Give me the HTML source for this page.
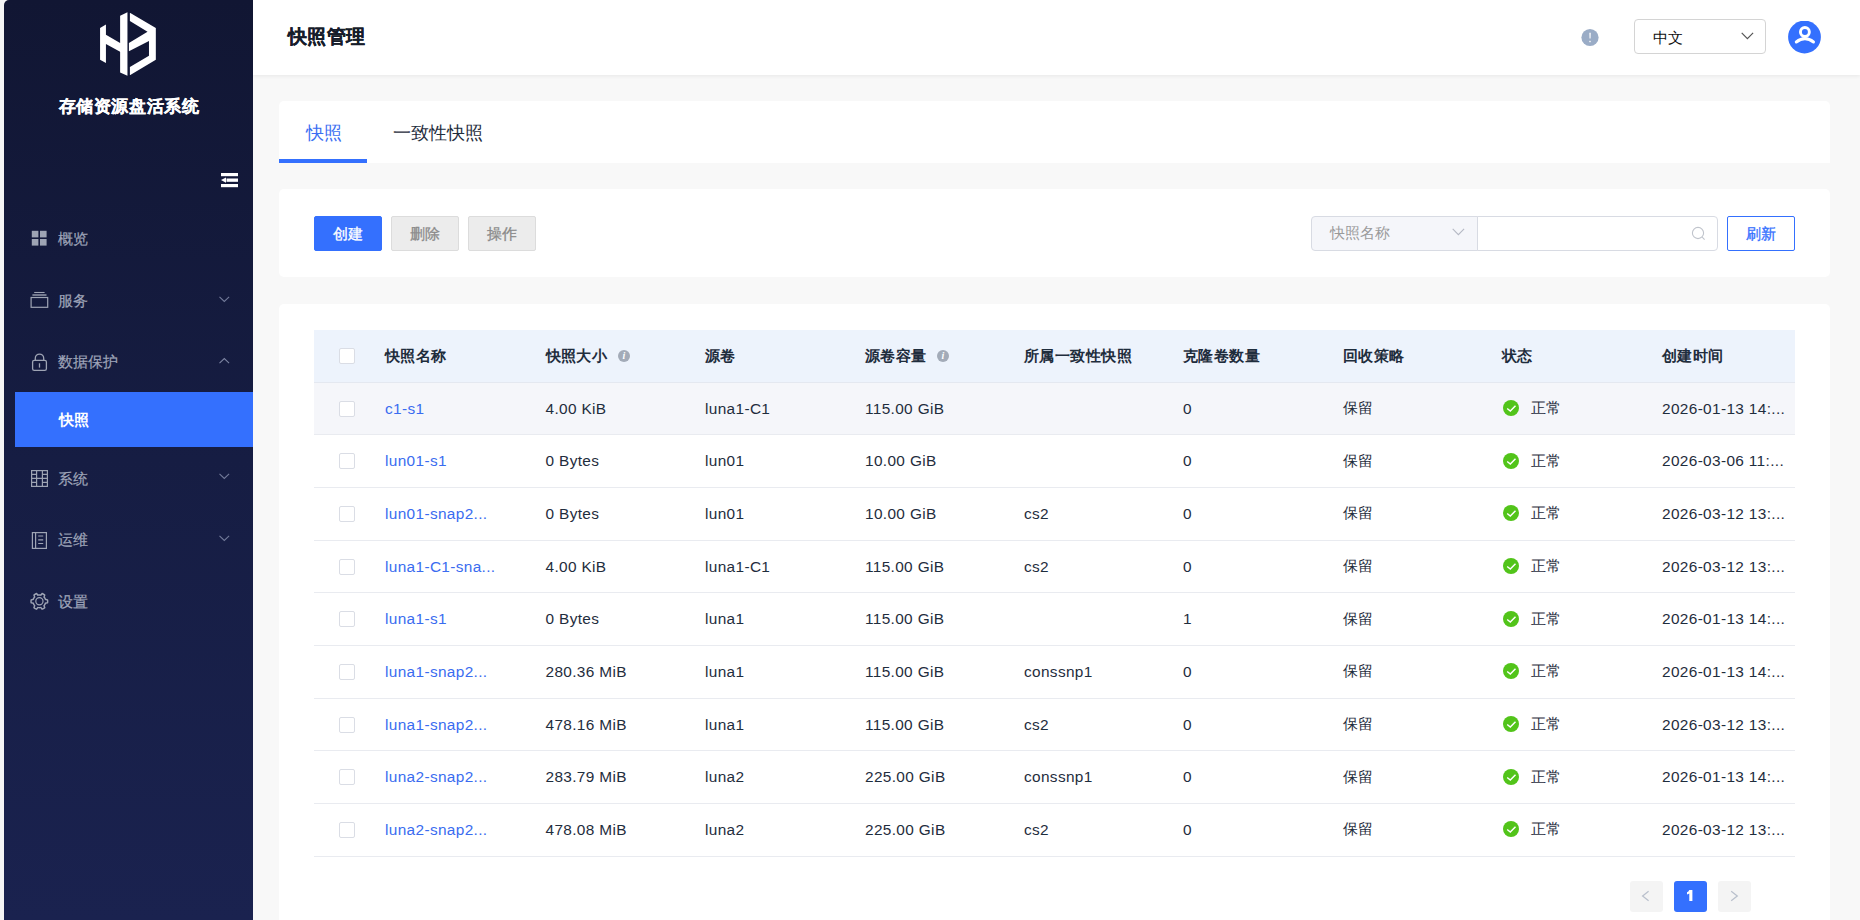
<!DOCTYPE html>
<html><head><meta charset="utf-8">
<style>
*{box-sizing:border-box;margin:0;padding:0}
html,body{width:1860px;height:920px;overflow:hidden}
body{position:relative;background:#f8f8f8;font-family:"Liberation Sans",sans-serif;color:#333}
.abs{position:absolute}
.t{position:absolute;white-space:nowrap;line-height:20px;height:20px;margin-top:-10px}
#strip{left:0;top:0;width:4px;height:920px;background:#f5f5f5}
#side{left:4px;top:0;width:249px;height:920px;background:linear-gradient(180deg,#111633 0%,#161d43 50%,#1a224f 100%);border-top-left-radius:5px}
#header{left:253px;top:0;width:1607px;height:75px;background:#fff;box-shadow:0 1px 4px rgba(0,0,0,.07)}
.card{background:#fff;border-radius:5px}
#tabs{left:279px;top:101px;width:1551px;height:62px;border-radius:5px 5px 0 0}
#tools{left:279px;top:189px;width:1551px;height:88px}
#tcard{left:279px;top:304px;width:1551px;height:660px}
.nav{font-size:15.4px;color:#9ea4b8;-webkit-text-stroke:0.2px #9ea4b8}
.navsel{left:15px;top:392px;width:238px;height:55px;background:#3470fe}
.thead{background:#edf3fc;border-bottom:1px solid #e4e8f0}
.row{border-bottom:1px solid #e9ebf0}
.cb{width:16px;height:16px;border:1px solid #dadde5;border-radius:2px;background:#fff}
.th{font-size:15.4px;font-weight:bold;color:#1f2d3d;letter-spacing:0.45px}
.td{font-size:15.4px;color:#1f2d3d;margin-top:-10.6px}
.link{color:#3a6cf0}
.info{width:12px;height:12px;border-radius:50%;background:#a3abb8;color:#fff;font-size:10px;line-height:12px;text-align:center;font-family:"Liberation Serif",serif;font-weight:bold}
.btn{height:35px;line-height:34px;text-align:center;font-size:15.4px;border-radius:2px}
.lat{letter-spacing:0.35px;margin-top:-10px}

</style></head><body>
<div id="strip" class="abs"></div>
<div id="side" class="abs"></div>
<svg class="abs" style="left:80px;top:0" width="100" height="90" viewBox="0 0 1022 920"><path fill="#fff" d="M205 285 L265 250 L265 355 L410 440 L410 160 L485 125 L485 775 L410 740 L410 530 L265 450 L265 645 L205 610 Z"/><path fill="#fff" d="M510 130 L775 285 L775 610 L510 770 L510 685 L705 570 L705 420 L500 525 L500 440 L690 325 L510 215 Z"/></svg>
<div class="t" style="left:0.5px;width:257px;text-align:center;top:106.5px;font-size:17px;letter-spacing:0.6px;font-weight:bold;color:#fff;-webkit-text-stroke:0.2px #fff">存储资源盘活系统</div>
<svg class="abs" style="left:220px;top:172px" width="20" height="16" viewBox="0 0 20 16"><rect x="1" y="1" width="17" height="3.2" fill="#fff"/><rect x="6.5" y="6.5" width="11.5" height="3.3" fill="#fff"/><path d="M1 8.1 L6 5.4 L6 10.8 Z" fill="#fff"/><rect x="1" y="12" width="17" height="3.2" fill="#fff"/></svg>
<!-- nav icons -->
<svg class="abs" style="left:31px;top:230px" width="17" height="17" viewBox="0 0 17 17" fill="#9ea4b4"><rect x="0.8" y="0.8" width="6.6" height="6.6"/><rect x="9" y="0.8" width="6.6" height="6.6"/><rect x="0.8" y="9" width="6.6" height="6.6"/><rect x="9" y="9" width="6.6" height="6.6"/></svg>
<div class="t nav" style="left:58px;top:238.5px">概览</div>
<svg class="abs" style="left:29px;top:290px" width="21" height="20" viewBox="0 0 21 20" fill="none" stroke="#9ea4b4"><path d="M5.2 2.5 H15.6" stroke-width="1.1"/><path d="M3.4 5 H17.5" stroke-width="1.4"/><rect x="2.1" y="7.5" width="16.6" height="9.8" stroke-width="1.2"/></svg>
<div class="t nav" style="left:58px;top:300.5px">服务</div>
<svg class="abs" style="left:219px;top:295.5px" width="11" height="7" viewBox="0 0 11 7"><path d="M0.5 0.8 L5.3 5.5 L10.1 0.8" stroke="#737b9a" stroke-width="1.05" fill="none"/></svg>
<svg class="abs" style="left:30px;top:352px" width="19" height="20" viewBox="0 0 19 20" fill="none" stroke="#9ea4b4" stroke-width="1.3"><path d="M5.3 8.2 V6.3 A4.2 4.2 0 0 1 13.7 6.3 V8.2"/><rect x="2.6" y="8.3" width="13.8" height="10" rx="1.6"/><path d="M9.5 11.3 V15.6"/></svg>
<div class="t nav" style="left:58px;top:362px">数据保护</div>
<svg class="abs" style="left:219px;top:357px" width="11" height="7" viewBox="0 0 11 7"><path d="M0.5 6.2 L5.3 1.5 L10.1 6.2" stroke="#7d85a3" stroke-width="1.05" fill="none"/></svg>
<div class="abs navsel"></div>
<div class="t" style="left:59px;top:419.5px;font-size:15.4px;font-weight:bold;color:#fff">快照</div>
<svg class="abs" style="left:30px;top:469px" width="19" height="19" viewBox="0 0 19 19" fill="none" stroke="#9ea4b4" stroke-width="1.2"><rect x="1.6" y="1.6" width="15.8" height="15.8"/><path d="M6.6 1.6 V17.4 M12.4 1.6 V17.4 M1.6 9.4 H17.4 M1.6 5.4 H6.6 M1.6 13.3 H6.6 M12.4 5.4 H17.4 M12.4 13.3 H17.4"/></svg>
<div class="t nav" style="left:58px;top:478.5px">系统</div>
<svg class="abs" style="left:219px;top:473px" width="11" height="7" viewBox="0 0 11 7"><path d="M0.5 0.8 L5.3 5.5 L10.1 0.8" stroke="#737b9a" stroke-width="1.05" fill="none"/></svg>
<svg class="abs" style="left:30px;top:531px" width="19" height="20" viewBox="0 0 19 20" fill="none" stroke="#9ea4b4" stroke-width="1.2"><rect x="2.4" y="1.6" width="14" height="15.8"/><path d="M5.6 1.6 V17.4 M8.2 5 H13.2 M8.2 8.9 H13.2 M8.2 12.5 H13.2"/></svg>
<div class="t nav" style="left:58px;top:540px">运维</div>
<svg class="abs" style="left:219px;top:535px" width="11" height="7" viewBox="0 0 11 7"><path d="M0.5 0.8 L5.3 5.5 L10.1 0.8" stroke="#737b9a" stroke-width="1.05" fill="none"/></svg>
<svg class="abs" style="left:29.1px;top:591.4px" width="20.7" height="20.7" viewBox="0 0 1024 1024"><g transform="rotate(90 512 512)"><path fill="#9ea4b4" d="M924.8 625.7l-65.5-56c3.1-19 4.7-38.4 4.7-57.8s-1.6-38.8-4.7-57.8l65.5-56a32.03 32.03 0 009.3-35.2l-.9-2.6a443.74 443.74 0 00-79.7-137.9l-1.8-2.1a32.12 32.12 0 00-35.1-9.5l-81.3 28.9c-30-24.6-63.5-44-99.7-57.6l-15.7-85a32.05 32.05 0 00-25.8-25.700l-2.7-.5c-52.1-9.4-106.9-9.4-159 0l-2.7.5a32.05 32.05 0 00-25.8 25.7l-15.8 85.4a351.86 351.86 0 00-99 57.4l-81.9-29.1a32 32 0 00-35.1 9.5l-1.8 2.1a446.02 446.020 0 00-79.7 137.9l-.9 2.6c-4.5 12.5-.8 26.5 9.3 35.2l66.3 56.6c-3.1 18.8-4.6 38-4.6 57.1 0 19.2 1.5 38.4 4.6 57.1L99 625.5a32.03 32.03 0 00-9.3 35.2l.9 2.6c18.1 50.4 44.9 96.9 79.7 137.9l1.8 2.1a32.12 32.12 0 0035.1 9.5l81.9-29.1c29.8 24.5 63.1 43.9 99 57.4l15.8 85.4a32.05 32.05 0 0025.8 25.7l2.7.5a449.4 449.4 0 00159 0l2.7-.5a32.05 32.05 0 0025.8-25.7l15.7-85a350 350 0 0099.7-57.6l81.3 28.9a32 32 0 0035.1-9.5l1.8-2.1c34.8-41.1 61.6-87.5 79.7-137.900l.9-2.6c4.5-12.3.8-26.3-9.3-35zM788.3 465.9c2.5 15.1 3.8 30.6 3.8 46.1s-1.3 31-3.8 46.1l-6.6 40.1 74.7 63.9a370.03 370.03 0 01-42.6 73.6L721 702.8l-31.4 25.8c-23.9 19.6-50.5 35-79.3 45.8l-38.1 14.3-17.9 97a377.5 377.5 0 01-85 0l-17.9-97.2-37.8-14.5c-28.5-10.8-55-26.2-78.7-45.7l-31.4-25.9-93.4 33.2c-17-22.9-31.2-47.6-42.6-73.6l75.5-64.5-6.5-40c-2.4-14.9-3.7-30.300-3.7-45.5 0-15.3 1.2-30.6 3.7-45.5l6.5-40-75.5-64.5c11.3-26.1 25.6-50.7 42.6-73.6l93.4 33.2 31.4-25.9c23.7-19.5 50.2-34.9 78.7-45.7l37.9-14.3 17.9-97.2c28.1-3.2 56.8-3.2 85 0l17.9 97 38.1 14.3c28.7 10.8 55.4 26.2 79.3 45.8l31.4 25.8 92.8-32.9c17 22.9 31.2 47.6 42.6 73.6L781.8 426l6.5 39.9z"/></g><circle cx="515" cy="505" r="178" fill="none" stroke="#9ea4b4" stroke-width="60"/></svg>
<div class="t nav" style="left:58px;top:601.5px">设置</div>
<div id="header" class="abs"></div>
<div class="t" style="left:287.5px;top:36.8px;font-size:19px;letter-spacing:0.55px;font-weight:bold;color:#161c2a;-webkit-text-stroke:0.2px #161c2a">快照管理</div>
<svg class="abs" style="left:1580px;top:27px" width="20" height="20" viewBox="0 0 20 20"><circle cx="10" cy="10.5" r="8.6" fill="#9aacc6"/><path d="M9.35 5.8 H10.75 L10.55 11.6 H9.55 Z" fill="#fff"/><rect x="9.3" y="13.8" width="1.4" height="1.4" fill="#fff"/></svg>
<div class="abs" style="left:1634px;top:19px;width:132px;height:35px;border:1px solid #d4d4d4;border-radius:4px;background:#fff"></div>
<div class="t" style="left:1652.7px;top:37.5px;font-size:15.4px;color:#111">中文</div>
<svg class="abs" style="left:1740.8px;top:32px" width="13" height="8" viewBox="0 0 13 8"><path d="M0.7 0.8 L6.4 6.6 L12.1 0.8" stroke="#555" stroke-width="1.2" fill="none"/></svg>
<svg class="abs" style="left:1788px;top:21px" width="33" height="33" viewBox="0 0 33 33"><circle cx="16.5" cy="16" r="16.4" fill="#3470fe"/><circle cx="16.9" cy="11" r="4.45" fill="none" stroke="#fff" stroke-width="2.9"/><path d="M8.3 21 Q16.9 14.2 25.5 21" fill="none" stroke="#fff" stroke-width="3" stroke-linecap="round"/></svg>
<div id="tabs" class="abs card"></div>
<div class="t" style="left:306px;top:132.5px;font-size:17.6px;color:#3b6ef2">快照</div>
<div class="t" style="left:393px;top:132.5px;font-size:17.6px;color:#1f2d3d">一致性快照</div>
<div class="abs" style="left:279px;top:159px;width:88px;height:4px;background:#3470fe"></div>
<div id="tools" class="abs card"></div>
<div class="abs btn" style="left:314px;top:216px;width:68px;background:#3470fe;color:#fff;-webkit-text-stroke:0.35px #fff;border:1px solid #3470fe">创建</div>
<div class="abs btn" style="left:391px;top:216px;width:68px;background:#ececec;color:#8a8a8a;border:1px solid #dcdcdc;-webkit-text-stroke:0.3px #8a8a8a">删除</div>
<div class="abs btn" style="left:468px;top:216px;width:68px;background:#ececec;color:#8a8a8a;border:1px solid #dcdcdc;-webkit-text-stroke:0.3px #8a8a8a">操作</div>
<div class="abs" style="left:1311px;top:216px;width:167px;height:35px;background:#f5f6fa;border:1px solid #d8dbe3;border-radius:4px 0 0 4px"></div>
<div class="t" style="left:1330px;top:232.8px;font-size:15.4px;color:#9a9a9a">快照名称</div>
<svg class="abs" style="left:1451.6px;top:228px" width="13" height="8" viewBox="0 0 13 8"><path d="M0.7 0.8 L6.4 6.6 L12.1 0.8" stroke="#b5b9c4" stroke-width="1.1" fill="none"/></svg>
<div class="abs" style="left:1477px;top:216px;width:241px;height:35px;background:#fff;border:1px solid #d8dbe3;border-radius:0 4px 4px 0"></div>
<svg class="abs" style="left:1691px;top:226px" width="15" height="15" viewBox="0 0 15 15" fill="none" stroke="#c0c4cc" stroke-width="1.1"><circle cx="7" cy="7" r="5.6"/><path d="M11.2 11.2 L13.6 13.6"/></svg>
<div class="abs btn" style="left:1727px;top:216px;width:68px;background:#fff;color:#3470fe;border:1px solid #3470fe;-webkit-text-stroke:0.3px #3470fe">刷新</div>
<div id="tcard" class="abs card"></div>
<div class="abs thead" style="left:314px;top:330px;width:1481px;height:53px"></div>
<div class="abs cb" style="left:339px;top:348px"></div>
<div class="t th" style="left:385px;top:356px">快照名称</div>
<div class="t th" style="left:545.5px;top:356px">快照大小</div>
<div class="t th" style="left:705px;top:356px">源卷</div>
<div class="t th" style="left:865px;top:356px">源卷容量</div>
<div class="t th" style="left:1024px;top:356px">所属一致性快照</div>
<div class="t th" style="left:1183px;top:356px">克隆卷数量</div>
<div class="t th" style="left:1343px;top:356px">回收策略</div>
<div class="t th" style="left:1502px;top:356px">状态</div>
<div class="t th" style="left:1662px;top:356px">创建时间</div>
<div class="abs info" style="left:618px;top:350px"><i>i</i></div>
<div class="abs info" style="left:937px;top:350px"><i>i</i></div>
<div class="abs row" style="left:314px;top:383px;width:1481px;height:52px;background:#f5f6fa"></div>
<div class="abs cb" style="left:339px;top:400.634px"></div>
<div class="t td link lat" style="left:385px;top:408.634px">c1-s1</div>
<div class="t td lat" style="left:545.5px;top:408.634px">4.00 KiB</div>
<div class="t td lat" style="left:705px;top:408.634px">luna1-C1</div>
<div class="t td lat" style="left:865px;top:408.634px">115.00 GiB</div>
<div class="t td lat" style="left:1183px;top:408.634px">0</div>
<div class="t td" style="left:1343px;top:408.634px">保留</div>
<svg class="abs" style="left:1503px;top:400.134px" width="16" height="16" viewBox="0 0 16 16"><circle cx="8" cy="8" r="8" fill="#52c41a"/><path d="M4.2 8.5 L7.3 11.1 L12.5 5.8" stroke="#fff" stroke-width="1.45" fill="none"/></svg>
<div class="t td" style="left:1531px;top:408.634px">正常</div>
<div class="t td lat" style="left:1662px;top:408.634px">2026-01-13 14:...</div>
<div class="abs row" style="left:314px;top:435px;width:1481px;height:53px;background:#fff"></div>
<div class="abs cb" style="left:339px;top:453.300px"></div>
<div class="t td link lat" style="left:385px;top:461.300px">lun01-s1</div>
<div class="t td lat" style="left:545.5px;top:461.300px">0 Bytes</div>
<div class="t td lat" style="left:705px;top:461.300px">lun01</div>
<div class="t td lat" style="left:865px;top:461.300px">10.00 GiB</div>
<div class="t td lat" style="left:1183px;top:461.300px">0</div>
<div class="t td" style="left:1343px;top:461.300px">保留</div>
<svg class="abs" style="left:1503px;top:452.800px" width="16" height="16" viewBox="0 0 16 16"><circle cx="8" cy="8" r="8" fill="#52c41a"/><path d="M4.2 8.5 L7.3 11.1 L12.5 5.8" stroke="#fff" stroke-width="1.45" fill="none"/></svg>
<div class="t td" style="left:1531px;top:461.300px">正常</div>
<div class="t td lat" style="left:1662px;top:461.300px">2026-03-06 11:...</div>
<div class="abs row" style="left:314px;top:488px;width:1481px;height:53px;background:#fff"></div>
<div class="abs cb" style="left:339px;top:505.967px"></div>
<div class="t td link lat" style="left:385px;top:513.967px">lun01-snap2...</div>
<div class="t td lat" style="left:545.5px;top:513.967px">0 Bytes</div>
<div class="t td lat" style="left:705px;top:513.967px">lun01</div>
<div class="t td lat" style="left:865px;top:513.967px">10.00 GiB</div>
<div class="t td lat" style="left:1024px;top:513.967px">cs2</div>
<div class="t td lat" style="left:1183px;top:513.967px">0</div>
<div class="t td" style="left:1343px;top:513.967px">保留</div>
<svg class="abs" style="left:1503px;top:505.467px" width="16" height="16" viewBox="0 0 16 16"><circle cx="8" cy="8" r="8" fill="#52c41a"/><path d="M4.2 8.5 L7.3 11.1 L12.5 5.8" stroke="#fff" stroke-width="1.45" fill="none"/></svg>
<div class="t td" style="left:1531px;top:513.967px">正常</div>
<div class="t td lat" style="left:1662px;top:513.967px">2026-03-12 13:...</div>
<div class="abs row" style="left:314px;top:541px;width:1481px;height:52px;background:#fff"></div>
<div class="abs cb" style="left:339px;top:558.635px"></div>
<div class="t td link lat" style="left:385px;top:566.635px">luna1-C1-sna...</div>
<div class="t td lat" style="left:545.5px;top:566.635px">4.00 KiB</div>
<div class="t td lat" style="left:705px;top:566.635px">luna1-C1</div>
<div class="t td lat" style="left:865px;top:566.635px">115.00 GiB</div>
<div class="t td lat" style="left:1024px;top:566.635px">cs2</div>
<div class="t td lat" style="left:1183px;top:566.635px">0</div>
<div class="t td" style="left:1343px;top:566.635px">保留</div>
<svg class="abs" style="left:1503px;top:558.135px" width="16" height="16" viewBox="0 0 16 16"><circle cx="8" cy="8" r="8" fill="#52c41a"/><path d="M4.2 8.5 L7.3 11.1 L12.5 5.8" stroke="#fff" stroke-width="1.45" fill="none"/></svg>
<div class="t td" style="left:1531px;top:566.635px">正常</div>
<div class="t td lat" style="left:1662px;top:566.635px">2026-03-12 13:...</div>
<div class="abs row" style="left:314px;top:593px;width:1481px;height:53px;background:#fff"></div>
<div class="abs cb" style="left:339px;top:611.302px"></div>
<div class="t td link lat" style="left:385px;top:619.302px">luna1-s1</div>
<div class="t td lat" style="left:545.5px;top:619.302px">0 Bytes</div>
<div class="t td lat" style="left:705px;top:619.302px">luna1</div>
<div class="t td lat" style="left:865px;top:619.302px">115.00 GiB</div>
<div class="t td lat" style="left:1183px;top:619.302px">1</div>
<div class="t td" style="left:1343px;top:619.302px">保留</div>
<svg class="abs" style="left:1503px;top:610.802px" width="16" height="16" viewBox="0 0 16 16"><circle cx="8" cy="8" r="8" fill="#52c41a"/><path d="M4.2 8.5 L7.3 11.1 L12.5 5.8" stroke="#fff" stroke-width="1.45" fill="none"/></svg>
<div class="t td" style="left:1531px;top:619.302px">正常</div>
<div class="t td lat" style="left:1662px;top:619.302px">2026-01-13 14:...</div>
<div class="abs row" style="left:314px;top:646px;width:1481px;height:53px;background:#fff"></div>
<div class="abs cb" style="left:339px;top:663.968px"></div>
<div class="t td link lat" style="left:385px;top:671.968px">luna1-snap2...</div>
<div class="t td lat" style="left:545.5px;top:671.968px">280.36 MiB</div>
<div class="t td lat" style="left:705px;top:671.968px">luna1</div>
<div class="t td lat" style="left:865px;top:671.968px">115.00 GiB</div>
<div class="t td lat" style="left:1024px;top:671.968px">conssnp1</div>
<div class="t td lat" style="left:1183px;top:671.968px">0</div>
<div class="t td" style="left:1343px;top:671.968px">保留</div>
<svg class="abs" style="left:1503px;top:663.468px" width="16" height="16" viewBox="0 0 16 16"><circle cx="8" cy="8" r="8" fill="#52c41a"/><path d="M4.2 8.5 L7.3 11.1 L12.5 5.8" stroke="#fff" stroke-width="1.45" fill="none"/></svg>
<div class="t td" style="left:1531px;top:671.968px">正常</div>
<div class="t td lat" style="left:1662px;top:671.968px">2026-01-13 14:...</div>
<div class="abs row" style="left:314px;top:699px;width:1481px;height:52px;background:#fff"></div>
<div class="abs cb" style="left:339px;top:716.635px"></div>
<div class="t td link lat" style="left:385px;top:724.635px">luna1-snap2...</div>
<div class="t td lat" style="left:545.5px;top:724.635px">478.16 MiB</div>
<div class="t td lat" style="left:705px;top:724.635px">luna1</div>
<div class="t td lat" style="left:865px;top:724.635px">115.00 GiB</div>
<div class="t td lat" style="left:1024px;top:724.635px">cs2</div>
<div class="t td lat" style="left:1183px;top:724.635px">0</div>
<div class="t td" style="left:1343px;top:724.635px">保留</div>
<svg class="abs" style="left:1503px;top:716.135px" width="16" height="16" viewBox="0 0 16 16"><circle cx="8" cy="8" r="8" fill="#52c41a"/><path d="M4.2 8.5 L7.3 11.1 L12.5 5.8" stroke="#fff" stroke-width="1.45" fill="none"/></svg>
<div class="t td" style="left:1531px;top:724.635px">正常</div>
<div class="t td lat" style="left:1662px;top:724.635px">2026-03-12 13:...</div>
<div class="abs row" style="left:314px;top:751px;width:1481px;height:53px;background:#fff"></div>
<div class="abs cb" style="left:339px;top:769.303px"></div>
<div class="t td link lat" style="left:385px;top:777.303px">luna2-snap2...</div>
<div class="t td lat" style="left:545.5px;top:777.303px">283.79 MiB</div>
<div class="t td lat" style="left:705px;top:777.303px">luna2</div>
<div class="t td lat" style="left:865px;top:777.303px">225.00 GiB</div>
<div class="t td lat" style="left:1024px;top:777.303px">conssnp1</div>
<div class="t td lat" style="left:1183px;top:777.303px">0</div>
<div class="t td" style="left:1343px;top:777.303px">保留</div>
<svg class="abs" style="left:1503px;top:768.803px" width="16" height="16" viewBox="0 0 16 16"><circle cx="8" cy="8" r="8" fill="#52c41a"/><path d="M4.2 8.5 L7.3 11.1 L12.5 5.8" stroke="#fff" stroke-width="1.45" fill="none"/></svg>
<div class="t td" style="left:1531px;top:777.303px">正常</div>
<div class="t td lat" style="left:1662px;top:777.303px">2026-01-13 14:...</div>
<div class="abs row" style="left:314px;top:804px;width:1481px;height:53px;background:#fff"></div>
<div class="abs cb" style="left:339px;top:821.969px"></div>
<div class="t td link lat" style="left:385px;top:829.969px">luna2-snap2...</div>
<div class="t td lat" style="left:545.5px;top:829.969px">478.08 MiB</div>
<div class="t td lat" style="left:705px;top:829.969px">luna2</div>
<div class="t td lat" style="left:865px;top:829.969px">225.00 GiB</div>
<div class="t td lat" style="left:1024px;top:829.969px">cs2</div>
<div class="t td lat" style="left:1183px;top:829.969px">0</div>
<div class="t td" style="left:1343px;top:829.969px">保留</div>
<svg class="abs" style="left:1503px;top:821.469px" width="16" height="16" viewBox="0 0 16 16"><circle cx="8" cy="8" r="8" fill="#52c41a"/><path d="M4.2 8.5 L7.3 11.1 L12.5 5.8" stroke="#fff" stroke-width="1.45" fill="none"/></svg>
<div class="t td" style="left:1531px;top:829.969px">正常</div>
<div class="t td lat" style="left:1662px;top:829.969px">2026-03-12 13:...</div>
<div class="abs" style="left:1630px;top:881px;width:33px;height:31px;background:#f4f4f4;border-radius:3px"></div>
<svg class="abs" style="left:1641px;top:890px" width="10" height="13" viewBox="0 0 10 13"><path d="M7.6 1.3 L1.6 6 L7.6 10.8" stroke="#b9c0cc" stroke-width="1.25" fill="none"/></svg>
<div class="abs" style="left:1674px;top:881px;width:33px;height:31px;background:#3470fe;border-radius:3px"></div>
<svg class="abs" style="left:1680px;top:885px" width="20" height="20" viewBox="0 0 20 20"><path d="M9.3 4.9 H12.4 V16.1 H9.3 V8.4 Q8.3 9.1 7.0 9.4 V7.3 Q8.6 6.6 9.3 4.9 Z" fill="#fff"/></svg>
<div class="abs" style="left:1718px;top:881px;width:33px;height:31px;background:#f4f4f4;border-radius:3px"></div>
<svg class="abs" style="left:1730px;top:890px" width="10" height="13" viewBox="0 0 10 13"><path d="M1.2 1.3 L7.3 6 L1.2 10.8" stroke="#b9c0cc" stroke-width="1.25" fill="none"/></svg>
</body></html>
